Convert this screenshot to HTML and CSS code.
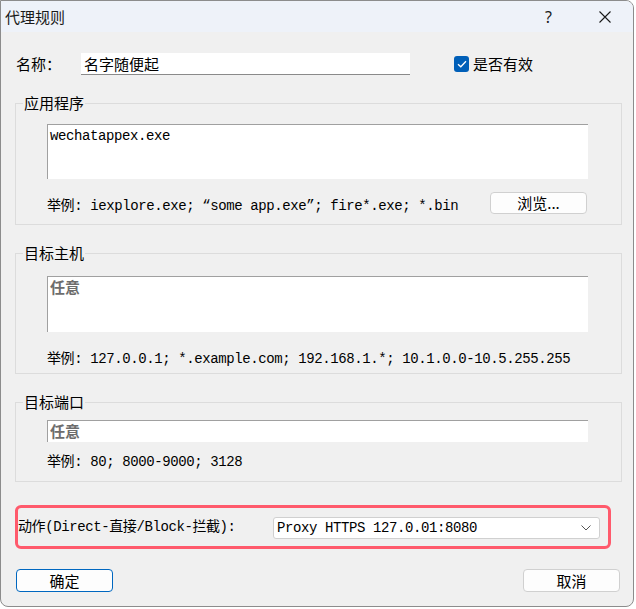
FILE: index.html
```
<!DOCTYPE html>
<html lang="zh-CN">
<head>
    <meta charset="UTF-8">
    <title>代理规则</title>
    <link rel="stylesheet" href="styles.css">
</head>
<body>
    <div class="window">
        <div class="titlebar">
            <span class="title">代理规则</span>
            <span class="help">?</span>
            <svg class="close" width="12" height="12" viewBox="0 0 12 12">
                <path d="M0.5 0.5 L11.5 11.5 M11.5 0.5 L0.5 11.5" stroke="#1a1a1a" stroke-width="1.1" fill="none"/>
            </svg>
        </div>

        <div class="content">
            <!-- name row -->
            <div class="name-row">
                <span class="label name-label">名称：</span>
                <div class="field name-field">名字随便起</div>
                <div class="check">
                    <span class="box">
                        <svg width="10" height="8" viewBox="0 0 10 8">
                            <path d="M1 4.2 L3.8 6.8 L9 1.2" stroke="#fff" stroke-width="1.3" fill="none"/>
                        </svg>
                    </span>
                    <span class="label">是否有效</span>
                </div>
            </div>

            <fieldset class="group group-app">
                <legend>应用程序</legend>
                <div class="group-body">
                    <div class="area app-area mono">wechatappex.exe</div>
                    <div class="hint-row">
                        <span class="hint mono">举例: iexplore.exe; “some app.exe”; fire*.exe; *.bin</span>
                        <button class="btn browse">浏览...</button>
                    </div>
                </div>
            </fieldset>

            <fieldset class="group group-host">
                <legend>目标主机</legend>
                <div class="group-body">
                    <div class="area host-area placeholder">任意</div>
                    <div class="hint mono">举例: 127.0.0.1; *.example.com; 192.168.1.*; 10.1.0.0-10.5.255.255</div>
                </div>
            </fieldset>

            <fieldset class="group group-port">
                <legend>目标端口</legend>
                <div class="group-body">
                    <div class="area port-area placeholder">任意</div>
                    <div class="hint mono">举例: 80; 8000-9000; 3128</div>
                </div>
            </fieldset>

            <div class="action-row">
                <span class="action-label mono">动作(Direct-直接/Block-拦截):</span>
                <div class="select mono">
                    <span>Proxy HTTPS 127.0.01:8080</span>
                    <svg width="10" height="6" viewBox="0 0 10 6">
                        <path d="M0.5 0.5 L5 5 L9.5 0.5" stroke="#555" stroke-width="1" fill="none"/>
                    </svg>
                </div>
            </div>

            <div class="button-row">
                <button class="btn ok">确定</button>
                <button class="btn cancel">取消</button>
            </div>
        </div>
    </div>
</body>
</html>
```

FILE: styles.css
```
body {
    margin: 0;
    background-color: #ffffff;
    font-family: "Noto Sans CJK SC", sans-serif;
    color: #000;
}
.window {
    width: 632px;
    height: 605px;
    background-color: #f0f0f0;
    border: 1px solid #8c8c8c;
    border-radius: 0 8px 8px 8px;
    overflow: hidden;
}
.titlebar {
    height: 31px;
    background-color: #eef2f9;
    display: flex;
    align-items: center;
    padding-left: 4px;
}
.title {
    font-size: 15px;
    color: #1a1a1a;
    flex: 1;
}
.help {
    font-family: "Noto Sans", sans-serif;
    font-size: 16px;
    color: #1a1a1a;
    margin-right: 47px;
}
.close {
    margin-right: 22px;
}
.content {
    padding: 0 11px 0 14px;
}
.mono {
    font-family: "Liberation Mono", "Noto Sans CJK SC", monospace;
    font-size: 14px;
    letter-spacing: -0.4px;
}
.label {
    font-size: 15px;
    line-height: 20px;
}
.name-row {
    display: flex;
    align-items: center;
    margin-top: 21px;
    height: 22px;
}
.name-label {
    margin-left: 1px;
    width: 65px;
}
.field {
    background-color: #fff;
    height: 21px;
    border-bottom: 1px solid #8a8a8a;
    box-sizing: content-box;
}
.name-field {
    width: 326px;
    padding-left: 3px;
    font-size: 15px;
    line-height: 21px;
}
.check {
    display: flex;
    align-items: center;
    margin-left: 44px;
}
.box {
    width: 15px;
    height: 16px;
    border-radius: 3px;
    background-color: #005fb8;
    display: flex;
    align-items: center;
    justify-content: center;
    margin-right: 4px;
}
.group {
    margin: 18px 0 0 0;
    padding: 0;
    border: 1px solid #dcdcdc;
    width: 605px;
}
.group legend {
    margin-left: 7px;
    padding: 0 1px;
    font-size: 15px;
    line-height: 20px;
}
.group-body {
    padding-left: 31px;
}
.area {
    background-color: #fff;
    border-top: 1px solid #a0a0a0;
    border-left: 1px solid #a0a0a0;
    width: 541px;
    padding: 2px 0 0 2px;
    box-sizing: border-box;
    line-height: 18px;
}
.placeholder {
    color: #6d6d6d;
    font-size: 15px;
    font-weight: bold;
    line-height: 17px;
    padding-top: 1px;
}
.app-area {
    margin-top: 11px;
    height: 55px;
}
.hint-row {
    display: flex;
    align-items: flex-end;
    justify-content: space-between;
    width: 541px;
    margin-top: 13px;
    padding-bottom: 10px;
}
.hint {
    line-height: 16px;
}
.btn {
    font-family: "Noto Sans CJK SC", sans-serif;
    font-size: 15px;
    background-color: #fdfdfd;
    border: 1px solid #d0d0d0;
    border-radius: 4px;
    height: 23px;
    width: 97px;
    padding: 0;
    line-height: 20px;
    color: #000;
}
.browse {
    height: 22px;
    margin-right: 1px;
}
.host-area {
    margin-top: 13px;
    height: 56px;
}
.group-host .hint {
    margin-top: 19px;
    padding-bottom: 6px;
}
.port-area {
    margin-top: 8px;
    height: 22px;
}
.group-port .hint {
    margin-top: 12px;
    padding-bottom: 11px;
}
.action-row {
    margin-top: 23px;
    width: 582px;
    height: 38px;
    border: 3px solid #ff5a6c;
    border-radius: 6px;
    display: flex;
    align-items: center;
    justify-content: space-between;
    padding-right: 8px;
}
.action-label {
    line-height: 20px;
}
.select {
    width: 327px;
    height: 22px;
    box-sizing: border-box;
    background-color: #fff;
    border: 1px solid #d0d0d0;
    border-radius: 3px;
    display: flex;
    align-items: center;
    justify-content: space-between;
    padding: 0 8px 0 3px;
    margin-top: 1px;
}
.button-row {
    margin-top: 20px;
    display: flex;
    justify-content: space-between;
    width: 604px;
    padding-left: 1px;
}
.ok {
    border-color: #0067c0;
}
```
